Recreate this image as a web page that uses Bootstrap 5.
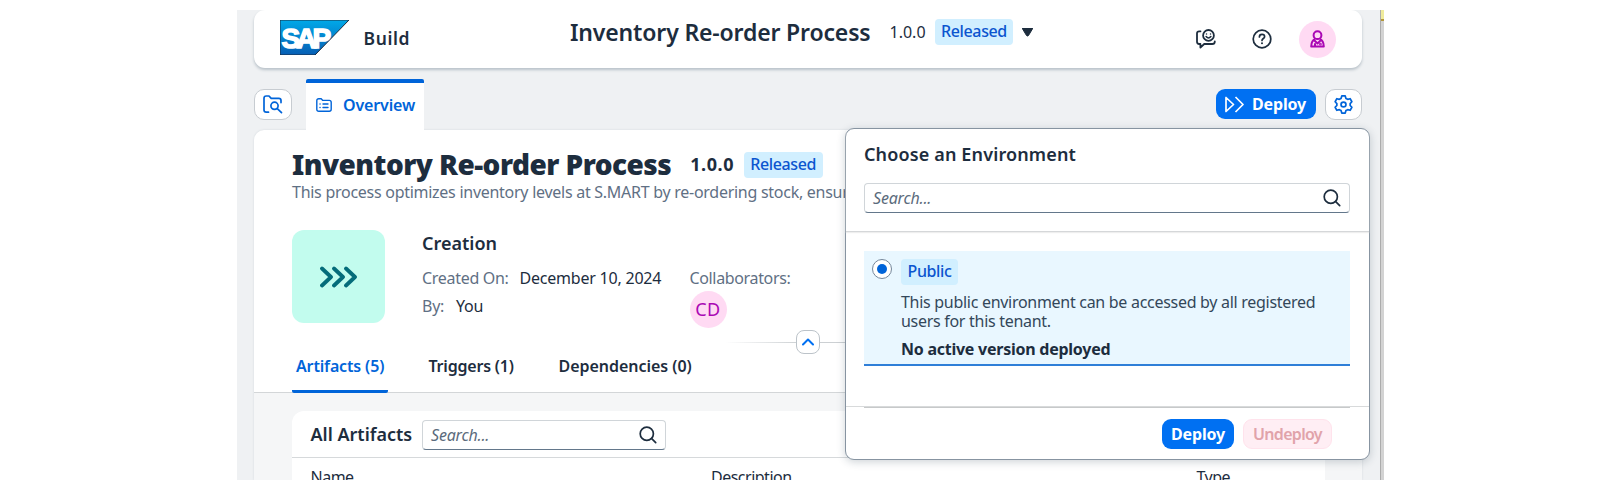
<!DOCTYPE html>
<html lang="en">
<head>
<meta charset="utf-8">
<meta name="viewport" content="width=device-width, initial-scale=1">
<title>Inventory Re-order Process</title>
<link href="https://cdn.jsdelivr.net/npm/bootstrap@5.3.0/dist/css/bootstrap.min.css" rel="stylesheet">
<style>
:root { --ink:#1d2d3e; --muted:#5f7084; --blue:#0064d9; --btn:#0070f2; --line:#d5d8da; }
body { font-family:"Noto Sans","Open Sans",sans-serif; font-size:16px; line-height:22px; letter-spacing:-.27px; color:var(--ink); background:#fff; overflow:hidden; }
svg { display:block; flex:none; fill:none; stroke:currentColor; }
.app-window { width:1147px; height:470px; margin:10px 0 0 237px; background:#eff1f3; }
.scroll-edge { width:4px; background:#d3d3d3; border-left:1.5px solid #acacac; }
.scroll-edge span { display:block; height:11px; background:#efeb9c; border-bottom:2px solid #b4983c; }
.app-body { width:1125px; padding-left:17px; }
.shell { height:58px; border-radius:11px; box-shadow:0 2px 3px #b9c2c9; }
.semi { font-weight:600; letter-spacing:-.1px; }
.product { font-size:17.5px; letter-spacing:.6px; margin:7px 0 0 14.5px; }
.shell-left { width:316px; padding:10px 0 0 26px; }
.shell-title { font-size:23px; letter-spacing:-.16px; margin-right:19px; }
.tag-blue { background:#d1efff; color:#0b55cf; font-weight:500; letter-spacing:-.37px; border-radius:4px; height:26px; line-height:25px; padding:0 6.500px; }
.avatar-dot { width:37px; height:37px; background:#ffdaf3; color:#aa08b4; border-radius:50%; }
.tool-btn { width:37.5px; height:31px; border:1.500px solid #c7ccd1; border-radius:10px; background:#fff; color:var(--blue); }
.main-tab { width:118px; height:51px; border-top:4px solid var(--blue); border-radius:2px 2px 0 0; color:var(--blue); padding:0 8px 4px 10px; margin-top:1px; }
.action { background:var(--btn); color:#fff; font-weight:700; letter-spacing:-.15px; height:30.5px; border-radius:9px; }
.page { height:350px; border-radius:10px 10px 0 0; box-shadow:0 0 2px #cfd5da; }
.page-head { height:263px; border-bottom:1px solid #d3d6d8; padding:19px 38px 0; }
.page-title { font-size:28px; font-weight:900; letter-spacing:-.54px; line-height:30px; margin-right:19px; }
.ver-bold { font-size:18px; font-weight:700; letter-spacing:.6px; margin-right:9.500px; }
.muted { color:var(--muted); }
.tile { width:93px; height:93px; border-radius:12px; background:#c2fcee; color:#046c7a; }
.sec-title { font-size:18px; font-weight:600; letter-spacing:0; line-height:26px; }
.collapse-rule { height:1px; width:150px; margin:-.5px 0 0 433px; background:linear-gradient(90deg,#fff,#ccd0d3 50%); }
.fold { width:24px; height:24px; border-radius:8px; border:1.500px solid #bcc3c9; color:var(--btn); left:71px; top:-12px; }
.tab-strip { height:50.500px; }
.tab-strip > div { height:38px; line-height:23px; }
.tab-on { color:var(--blue); width:95.5px; padding-left:4px; border-bottom:3.5px solid var(--blue); border-radius:2px; }
.lower { background:#f5f6f7; padding:18px 37px 0 38px; }
.panel-top { height:47px; border-bottom:1px solid #d6d9db; padding:9px 0 0 18.500px; }
.panel-box { border-radius:12px 12px 0 0; height:70px; }
.search-box { border:1px solid #d0d5d9; border-bottom:1.5px solid #63778b; border-radius:4px; height:30px; padding:0 8px; background:#fff; }
.search-box i { color:#5b6b7c; letter-spacing:-.2px; }
.heads { padding:8px 18.500px 0; }
.heads span { letter-spacing:-.5px; }
.pop { left:607.500px; top:118px; width:525px; height:332px; border:1.5px solid #8794a1; border-radius:9px; background:#fff; box-shadow:0 2px 9px rgba(34,53,72,.22); }
.pop-head { height:103px; border-bottom:1px solid #d5d7d9; box-shadow:0 1px 1px #eee; padding:11.500px 18.500px 0; }
.env { margin:19px 18.500px 0; height:115px; background:#e9f7ff; border-bottom:2px solid #2f7fd8; padding:7.500px 9px 0 8px; }
.radio-ring { width:20px; height:20px; border:1.5px solid #75879a; border-radius:50%; background:#fff; margin-top:.5px; }
.radio-ring span { width:10px; height:10px; border-radius:50%; background:var(--blue); }
.env-text { line-height:19px; color:#33475a; letter-spacing:-.29px; margin-top:8.500px; }
.pop-foot { border-top:1px solid #d8dadb; margin-top:39.500px; }
.pop-foot hr { margin:0 18.500px; border:0; border-top:1.5px solid #c7c9ca; opacity:1; height:0; }
.undo { background:#ffeef4; border:1px solid #ffe3ec; color:#e1a3aa; font-weight:600; letter-spacing:-.7px; }
</style>
</head>
<body>
<div class="app-window position-relative overflow-hidden d-flex justify-content-between">
  <div class="app-body">
    <header class="shell bg-white d-flex">
      <div class="shell-left d-flex align-items-start">
        <svg width="69" height="35" viewBox="0 0 69 35" stroke="none">
          <defs><linearGradient id="lg" x2="0" y2="1"><stop stop-color="#00a9e8"/><stop offset="1" stop-color="#075eb4"/></linearGradient></defs>
          <path fill="url(#lg)" d="M0 0h69L35 35H0z"/>
          <text x="1.500" y="27.5" font-family="Liberation Sans, sans-serif" font-weight="700" font-size="28" fill="#fff" stroke="#fff" stroke-width="1.500" textLength="49.500" lengthAdjust="spacing">SAP</text>
        </svg>
        <span class="product fw-semibold">Build</span>
      </div>
      <div class="d-flex align-items-center flex-grow-1" style="height:44px">
        <span class="shell-title fw-semibold">Inventory Re-order Process</span>
        <span class="me-2" style="letter-spacing:0">1.0.0</span>
        <span class="tag-blue" style="margin-left:1px">Released</span>
        <svg style="margin-left:9px" width="11" height="9" viewBox="0 0 11 9" stroke="none"><path fill="#1d2d3e" d="M0 0h11L6.5 7.5q-1 1-2 0z"/></svg>
      </div>
      <div class="d-flex align-items-center pe-4">
        <svg width="20" height="20" viewBox="0 0 20 20" stroke-width="1.8" stroke-linecap="round" stroke-linejoin="round"><path d="M4.5 2.3H3.2Q1 2.3 1 4.5v8.3Q1 15 3.2 15h1.2v3.6L8.2 15h8q2.6 0 2.6-2.6"/><circle cx="12.500" cy="6.4" r="5.400"/><path d="M10.100 7.600q2.4 2.6 4.8 0M10.500 4.900v.2M14.500 4.900v.2" stroke-width="1.5"/></svg>
        <svg style="margin-left:36px" width="20" height="20" viewBox="0 0 20 20" stroke-width="1.7" stroke-linecap="round"><circle cx="10" cy="10" r="8.8"/><path d="M7.4 8q0-2.6 2.6-2.6t2.6 2.3c0 1.8-2.6 1.9-2.6 3.8"/><path d="M10 14.2v.1" stroke-width="2"/></svg>
        <div class="avatar-dot d-flex align-items-center justify-content-center" style="margin-left:27px;margin-right:2px">
          <svg width="15" height="18" viewBox="0 0 15 18" stroke-width="2" stroke-linejoin="round"><circle cx="7.500" cy="5.200" r="3.900"/><path d="M5 9.300Q1.500 10.300 1.200 16.500h12.600Q13.500 10.300 10 9.300M4.500 10.500l3 3 3-3M5 13.200v3"/><path d="M9.600 13.300h1.600v1.600H9.600z" stroke-width="1"/></svg>
        </div>
      </div>
    </header>

    <div class="d-flex align-items-end" style="height:62px">
      <div class="d-flex align-items-center w-100" style="height:52px">
        <span class="tool-btn d-flex align-items-center justify-content-center">
          <svg width="20" height="19" viewBox="0 0 20 19" stroke-width="1.7" stroke-linecap="round" stroke-linejoin="round"><path d="M5.5 17.2H3.2Q1 17.2 1 15V3.2Q1 1 3.2 1H6l2.2 2.4h7.6Q18 3.400 18 5.600v2"/><circle cx="11.500" cy="10.800" r="3.600"/><path d="M14.300 13.600l4.200 4.100"/></svg>
        </span>
        <div class="main-tab bg-white d-flex align-items-center" style="margin-left:14.500px">
          <svg width="16" height="14" viewBox="0 0 16 14" stroke-width="1.400" stroke-linecap="round" stroke-linejoin="round"><path d="M.8 2.800Q.8.8 2.800.8h2.400l1.600 1.600h6.400q2 0 2 2v6.800q0 2-2 2H2.800q-2 0-2-2zM4 6h.1M4 9.500h.1M7 6h5M7 9.500h5"/></svg>
          <span class="semi" style="margin-left:11px;letter-spacing:-.15px">Overview</span>
        </div>
        <span class="action d-flex align-items-center ms-auto" style="width:99.500px;padding-left:9px">
          <svg width="19" height="17" viewBox="0 0 19 17" stroke-width="1.700" stroke-linejoin="round"><path d="M1 1.500v14l7.500-7zM10.500 1l7.500 7.500-7.500 7.500"/></svg>
          <span class="ps-2">Deploy</span>
        </span>
        <span class="tool-btn d-flex align-items-center justify-content-center" style="margin-left:9px">
          <svg width="19" height="19" viewBox="0 0 20 20" stroke-width="1.800" stroke-linejoin="round"><path d="M8.200 1h3.600l.8 2.600 1.800 1 2.600-.7 1.800 3.200L17 9v2l1.800 1.900-1.800 3.200-2.600-.7-1.800 1-.8 2.600H8.200l-.8-2.600-1.800-1-2.600.7-1.800-3.200L3 11V9L1.200 7.100 3 3.900l2.600.7 1.800-1z"/><circle cx="10" cy="10" r="2.600"/></svg>
        </span>
      </div>
    </div>

    <main class="page bg-white">
      <section class="page-head">
        <div class="d-flex align-items-center">
          <span class="page-title">Inventory Re-order Process</span>
          <span class="ver-bold">1.0.0</span>
          <span class="tag-blue" style="margin-top:1px">Released</span>
        </div>
        <div class="muted text-nowrap" style="margin-top:1.500px">This process optimizes inventory levels at S.MART by re-ordering stock, ensuring</div>
        <div class="d-flex" style="margin-top:27.500px;height:112px">
          <div class="tile d-flex align-items-center justify-content-center">
            <svg width="38" height="22" viewBox="0 0 38 22" stroke-width="3.800" stroke-linecap="round" stroke-linejoin="round"><path d="M2 2.500L11 11l-9 8.500M14 2.500L23 11l-9 8.500M26 2.500L35 11l-9 8.500"/></svg>
          </div>
          <div style="width:267.500px;margin-left:37px">
            <div class="sec-title">Creation</div>
            <div style="margin-top:11px"><span class="muted" style="letter-spacing:-.3px">Created On:</span><span style="margin-left:11px;letter-spacing:-.22px">December 10, 2024</span></div>
            <div style="margin-top:6px"><span class="muted">By:</span><span style="margin-left:12px">You</span></div>
          </div>
          <div style="padding-top:37px">
            <div class="muted" style="letter-spacing:-.35px">Collaborators:</div>
            <div class="avatar-dot d-flex align-items-center justify-content-center" style="margin-top:2px;padding-bottom:1px;font-size:18px;letter-spacing:.5px">CD</div>
          </div>
        </div>
        <div class="collapse-rule position-relative">
          <span class="fold bg-white position-absolute d-flex align-items-center justify-content-center"><svg width="12" height="8" viewBox="0 0 12 8" stroke-width="2" stroke-linecap="round" stroke-linejoin="round"><path d="M1 6.500l5-5 5 5"/></svg></span>
        </div>
        <div class="tab-strip semi d-flex align-items-end">
          <div class="tab-on" style="letter-spacing:-.15px">Artifacts (5)</div>
          <div style="margin-left:41px;width:130px;letter-spacing:-.2px">Triggers (1)</div>
          <div style="letter-spacing:-.03px">Dependencies (0)</div>
        </div>
      </section>
      <section class="lower">
        <div class="panel-box bg-white">
          <div class="panel-top d-flex">
            <span class="sec-title" style="width:111.500px;line-height:29px">All Artifacts</span>
            <div class="search-box d-flex align-items-center justify-content-between" style="width:244px"><i>Search...</i>
              <svg width="18" height="18" viewBox="0 0 18 18" stroke-width="1.700" stroke-linecap="round"><circle cx="7.800" cy="7.800" r="6.600"/><path d="M12.700 12.700l4 4"/></svg></div>
          </div>
          <div class="heads d-flex"><span style="width:400.500px">Name</span><span style="width:485.500px">Description</span><span>Type</span></div>
        </div>
      </section>
    </main>
  </div>
  <div class="scroll-edge"><span></span></div>

  <aside class="pop position-absolute">
    <div class="pop-head">
      <div class="sec-title" style="letter-spacing:.14px">Choose an Environment</div>
      <div class="search-box d-flex align-items-center justify-content-between" style="margin-top:16.500px"><i>Search...</i>
        <svg width="18" height="18" viewBox="0 0 18 18" stroke-width="1.700" stroke-linecap="round"><circle cx="7.800" cy="7.800" r="6.600"/><path d="M12.700 12.700l4 4"/></svg></div>
    </div>
    <div class="env d-flex">
      <div class="radio-ring d-flex align-items-center justify-content-center flex-shrink-0"><span></span></div>
      <div style="margin-left:9px">
        <span class="tag-blue d-inline-block align-top">Public</span>
        <div class="env-text" style="width:425px">This public environment can be accessed by all registered users for this tenant.</div>
        <div class="fw-bold" style="margin-top:7px;letter-spacing:-.25px">No active version deployed</div>
      </div>
    </div>
    <div class="pop-foot">
      <hr>
      <div class="d-flex justify-content-end" style="padding:11px 36.500px 0 0">
        <span class="action d-flex align-items-center justify-content-center" style="width:72px">Deploy</span>
        <span class="action undo d-flex align-items-center justify-content-center" style="width:89px;margin-left:9px">Undeploy</span>
      </div>
    </div>
  </aside>
</div>
<script src="https://cdn.jsdelivr.net/npm/bootstrap@5.3.0/dist/js/bootstrap.bundle.min.js"></script>
</body>
</html>
